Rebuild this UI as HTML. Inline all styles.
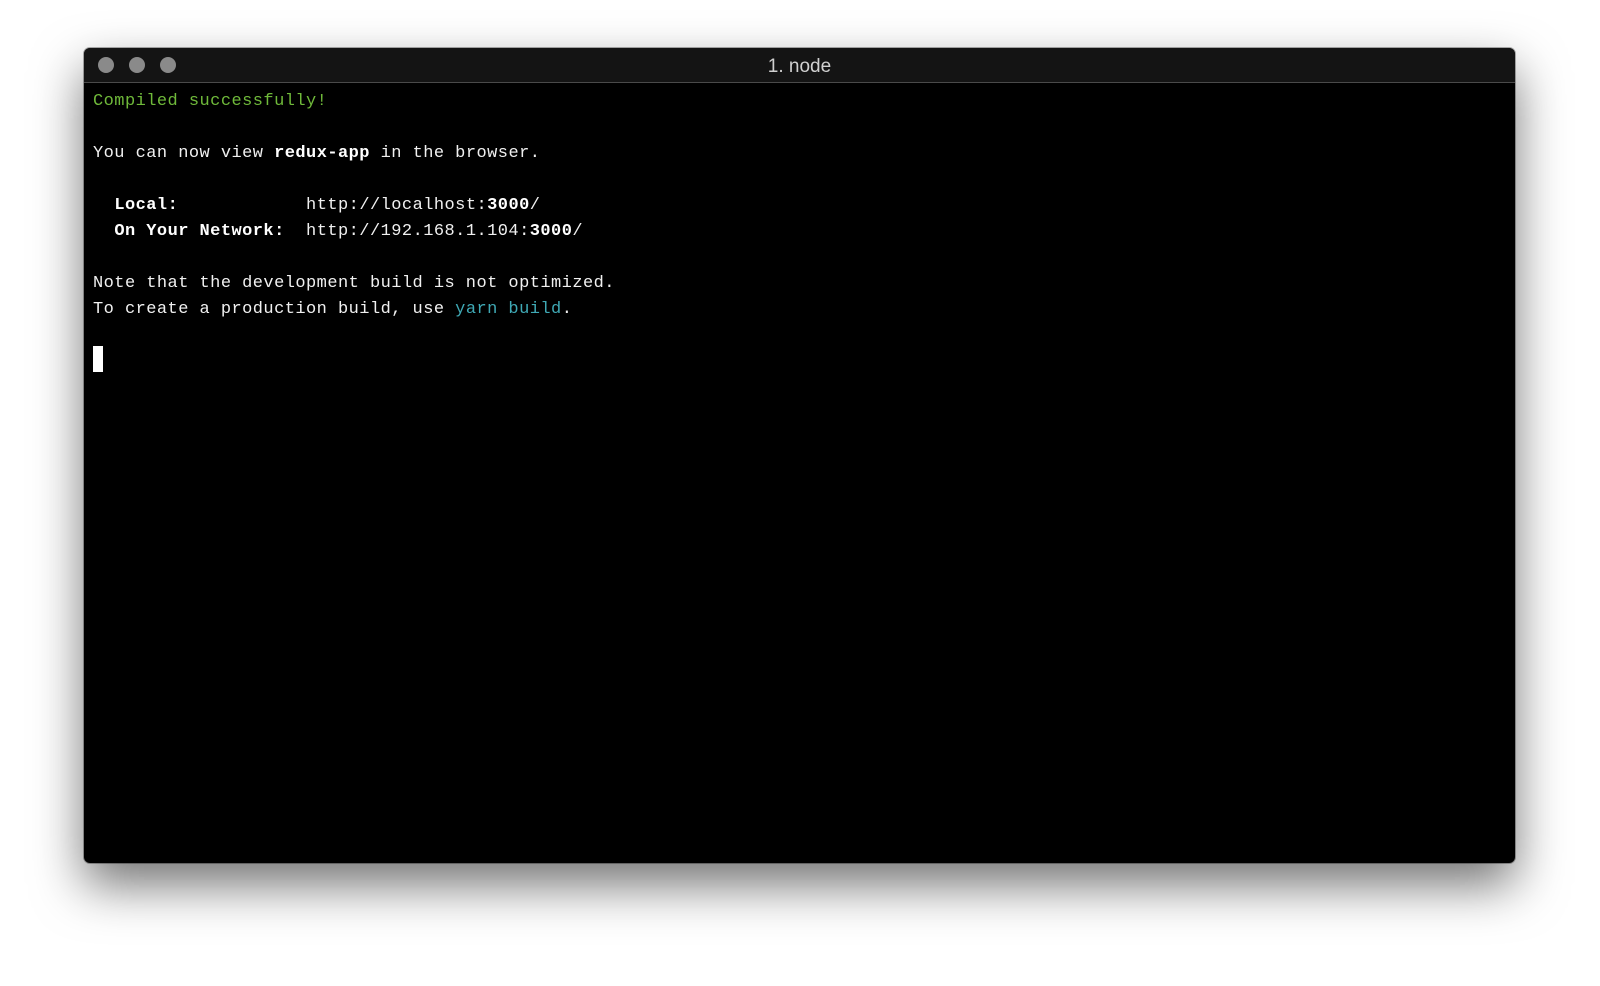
<!DOCTYPE html>
<html><head><style>
html,body{margin:0;padding:0;background:#fff;width:1600px;height:986px;overflow:hidden}
.win{position:absolute;left:84px;top:48px;width:1431px;height:815px;background:#000;border-radius:6px;box-shadow:0 22px 50px rgba(0,0,0,0.55),0 0 0 1px rgba(0,0,0,0.3);overflow:hidden}
.bar{position:absolute;left:0;top:0;right:0;height:34px;background:#141414;border-bottom:1px solid #4a4a4a}
.dot{position:absolute;top:9px;width:16px;height:16px;border-radius:50%;background:#8a8a8a}
.title{position:absolute;left:0;right:0;top:8px;text-align:center;color:#d0d0d0;font:19px "Liberation Sans",sans-serif}
.term{position:absolute;left:9px;top:41px;font:17px/26px "Liberation Mono",monospace;letter-spacing:0.45px;color:#f0f0f0;white-space:pre}
b{font-weight:bold;color:#fff}
.g{color:#6fb93a}.c{color:#3fa9b5}
.cur{display:inline-block;width:10px;height:26px;background:#fff;vertical-align:top;margin-top:-3px}
</style></head><body>
<div class="win">
<div class="bar"><div class="dot" style="left:14px"></div><div class="dot" style="left:45px"></div><div class="dot" style="left:76px"></div><div class="title">1. node</div></div>
<div class="term"><span class="g">Compiled successfully!</span>

You can now view <b>redux-app</b> in the browser.

  <b>Local:</b>            http://localhost:<b>3000</b>/
  <b>On Your Network:</b>  http://192.168.1.104:<b>3000</b>/

Note that the development build is not optimized.
To create a production build, use <span class="c">yarn build</span>.

<span class="cur"></span></div>
</div>
</body></html>
